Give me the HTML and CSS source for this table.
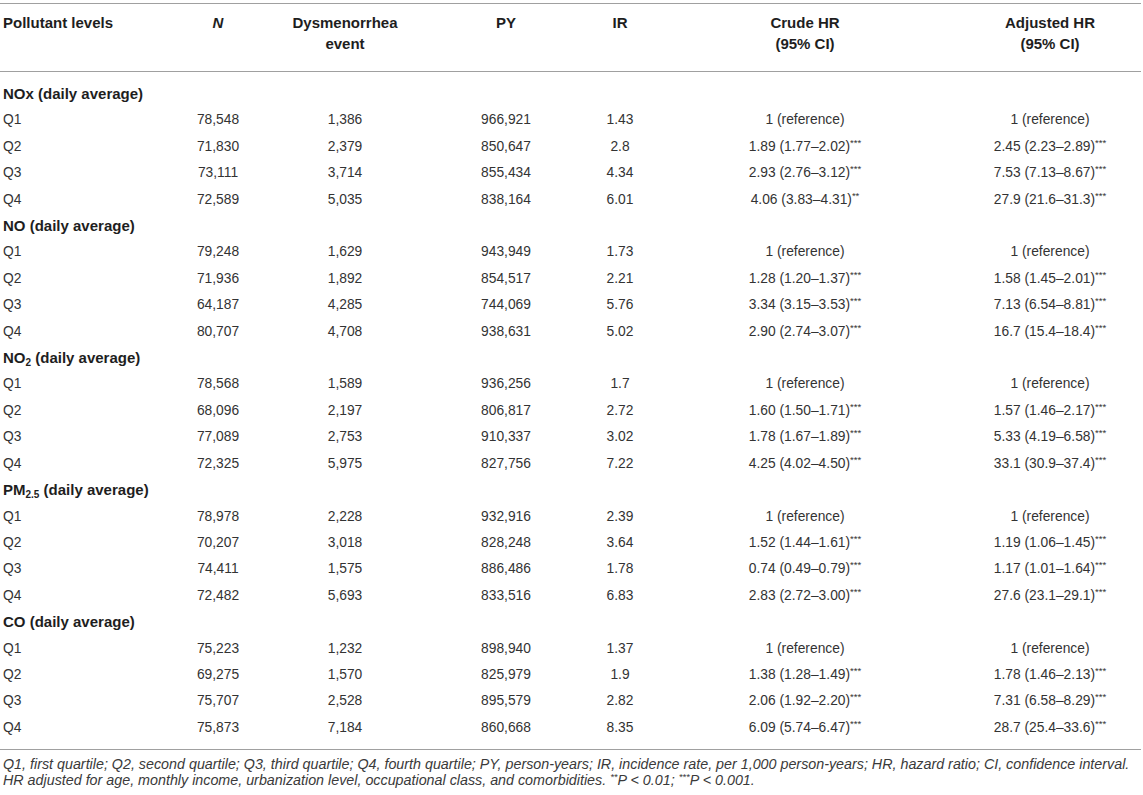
FILE: index.html
```html
<!DOCTYPE html>
<html lang="en">
<head>
<meta charset="utf-8">
<title>Pollutant levels and dysmenorrhea</title>
<link rel="stylesheet" href="styles.css">
</head>
<body>
<table class="data">
  <colgroup>
    <col class="c-label"><col class="c-n"><col class="c-ev"><col class="c-py"><col class="c-ir"><col class="c-crude"><col class="c-adj">
  </colgroup>
  <thead>
    <tr>
      <th class="left">Pollutant levels</th>
      <th><i>N</i></th>
      <th>Dysmenorrhea<br>event</th>
      <th>PY</th>
      <th>IR</th>
      <th>Crude HR<br>(95% CI)</th>
      <th class="last">Adjusted HR<br>(95% CI)</th>
    </tr>
  </thead>
  <tbody>
    <tr class="group first"><td colspan="7">NOx (daily average)</td></tr>
    <tr><td class="left">Q1</td><td>78,548</td><td>1,386</td><td>966,921</td><td>1.43</td><td>1 (reference)</td><td class="last">1 (reference)</td></tr>
    <tr><td class="left">Q2</td><td>71,830</td><td>2,379</td><td>850,647</td><td>2.8</td><td>1.89 (1.77–2.02)<sup>***</sup></td><td class="last">2.45 (2.23–2.89)<sup>***</sup></td></tr>
    <tr><td class="left">Q3</td><td>73,111</td><td>3,714</td><td>855,434</td><td>4.34</td><td>2.93 (2.76–3.12)<sup>***</sup></td><td class="last">7.53 (7.13–8.67)<sup>***</sup></td></tr>
    <tr><td class="left">Q4</td><td>72,589</td><td>5,035</td><td>838,164</td><td>6.01</td><td>4.06 (3.83–4.31)<sup>**</sup></td><td class="last">27.9 (21.6–31.3)<sup>***</sup></td></tr>

    <tr class="group"><td colspan="7">NO (daily average)</td></tr>
    <tr><td class="left">Q1</td><td>79,248</td><td>1,629</td><td>943,949</td><td>1.73</td><td>1 (reference)</td><td class="last">1 (reference)</td></tr>
    <tr><td class="left">Q2</td><td>71,936</td><td>1,892</td><td>854,517</td><td>2.21</td><td>1.28 (1.20–1.37)<sup>***</sup></td><td class="last">1.58 (1.45–2.01)<sup>***</sup></td></tr>
    <tr><td class="left">Q3</td><td>64,187</td><td>4,285</td><td>744,069</td><td>5.76</td><td>3.34 (3.15–3.53)<sup>***</sup></td><td class="last">7.13 (6.54–8.81)<sup>***</sup></td></tr>
    <tr><td class="left">Q4</td><td>80,707</td><td>4,708</td><td>938,631</td><td>5.02</td><td>2.90 (2.74–3.07)<sup>***</sup></td><td class="last">16.7 (15.4–18.4)<sup>***</sup></td></tr>

    <tr class="group"><td colspan="7">NO<sub>2</sub> (daily average)</td></tr>
    <tr><td class="left">Q1</td><td>78,568</td><td>1,589</td><td>936,256</td><td>1.7</td><td>1 (reference)</td><td class="last">1 (reference)</td></tr>
    <tr><td class="left">Q2</td><td>68,096</td><td>2,197</td><td>806,817</td><td>2.72</td><td>1.60 (1.50–1.71)<sup>***</sup></td><td class="last">1.57 (1.46–2.17)<sup>***</sup></td></tr>
    <tr><td class="left">Q3</td><td>77,089</td><td>2,753</td><td>910,337</td><td>3.02</td><td>1.78 (1.67–1.89)<sup>***</sup></td><td class="last">5.33 (4.19–6.58)<sup>***</sup></td></tr>
    <tr><td class="left">Q4</td><td>72,325</td><td>5,975</td><td>827,756</td><td>7.22</td><td>4.25 (4.02–4.50)<sup>***</sup></td><td class="last">33.1 (30.9–37.4)<sup>***</sup></td></tr>

    <tr class="group"><td colspan="7">PM<sub>2.5</sub> (daily average)</td></tr>
    <tr><td class="left">Q1</td><td>78,978</td><td>2,228</td><td>932,916</td><td>2.39</td><td>1 (reference)</td><td class="last">1 (reference)</td></tr>
    <tr><td class="left">Q2</td><td>70,207</td><td>3,018</td><td>828,248</td><td>3.64</td><td>1.52 (1.44–1.61)<sup>***</sup></td><td class="last">1.19 (1.06–1.45)<sup>***</sup></td></tr>
    <tr><td class="left">Q3</td><td>74,411</td><td>1,575</td><td>886,486</td><td>1.78</td><td>0.74 (0.49–0.79)<sup>***</sup></td><td class="last">1.17 (1.01–1.64)<sup>***</sup></td></tr>
    <tr><td class="left">Q4</td><td>72,482</td><td>5,693</td><td>833,516</td><td>6.83</td><td>2.83 (2.72–3.00)<sup>***</sup></td><td class="last">27.6 (23.1–29.1)<sup>***</sup></td></tr>

    <tr class="group"><td colspan="7">CO (daily average)</td></tr>
    <tr><td class="left">Q1</td><td>75,223</td><td>1,232</td><td>898,940</td><td>1.37</td><td>1 (reference)</td><td class="last">1 (reference)</td></tr>
    <tr><td class="left">Q2</td><td>69,275</td><td>1,570</td><td>825,979</td><td>1.9</td><td>1.38 (1.28–1.49)<sup>***</sup></td><td class="last">1.78 (1.46–2.13)<sup>***</sup></td></tr>
    <tr><td class="left">Q3</td><td>75,707</td><td>2,528</td><td>895,579</td><td>2.82</td><td>2.06 (1.92–2.20)<sup>***</sup></td><td class="last">7.31 (6.58–8.29)<sup>***</sup></td></tr>
    <tr class="lastrow"><td class="left">Q4</td><td>75,873</td><td>7,184</td><td>860,668</td><td>8.35</td><td>6.09 (5.74–6.47)<sup>***</sup></td><td class="last">28.7 (25.4–33.6)<sup>***</sup></td></tr>
  </tbody>
</table>
<p class="note">Q1, first quartile; Q2, second quartile; Q3, third quartile; Q4, fourth quartile; PY, person-years; IR, incidence rate, per 1,000 person-years; HR, hazard ratio; CI, confidence interval.<br>HR adjusted for age, monthly income, urbanization level, occupational class, and comorbidities. <sup>**</sup>P &lt; 0.01; <sup>***</sup>P &lt; 0.001.</p>
</body>
</html>
```

FILE: styles.css
```css
html, body {
  margin: 0;
  padding: 0;
  background: #ffffff;
}

body {
  padding-top: 3px;
  font-family: "Liberation Sans", Arial, Helvetica, sans-serif;
  font-size: 13.8px;
  color: #333333;
}

.data {
  width: 1141px;
  border-collapse: collapse;
  table-layout: fixed;
  border-top: 1px solid #a0a0a0;
  border-bottom: 1px solid #a0a0a0;
}

.c-label { width: 160px; }
.c-n { width: 116px; }
.c-ev { width: 138px; }
.c-py { width: 184px; }
.c-ir { width: 44px; }
.c-crude { width: 326px; }
.c-adj { width: 173px; }

.data th {
  font-size: 15px;
  font-weight: bold;
  color: #1e1e1e;
  text-align: center;
  vertical-align: top;
  line-height: 21px;
  padding: 8px 0 17px;
  border-bottom: 1px solid #a0a0a0;
  white-space: nowrap;
}

.data td {
  text-align: center;
  height: 26.4px;
  line-height: 26.4px;
  padding: 0;
  white-space: nowrap;
}

.data .left {
  text-align: left;
  padding-left: 3px;
}

.data .last {
  padding-right: 9px;
}

.data .group td {
  text-align: left;
  padding-left: 3px;
  font-size: 15px;
  font-weight: bold;
  color: #1e1e1e;
}

.data .first td {
  padding-top: 9px;
}

.data .lastrow td {
  padding-bottom: 8px;
}

.data sup {
  font-size: 9.5px;
  line-height: 0;
  vertical-align: 5px;
}

.data sub {
  font-size: 10px;
  line-height: 0;
  vertical-align: -3px;
}

.note {
  margin: 6px 0 0;
  padding-left: 3px;
  font-style: italic;
  font-size: 14.3px;
  line-height: 16px;
  color: #3a3a3a;
}

.note sup {
  font-size: 9.5px;
  line-height: 0;
  vertical-align: 5px;
}
```
